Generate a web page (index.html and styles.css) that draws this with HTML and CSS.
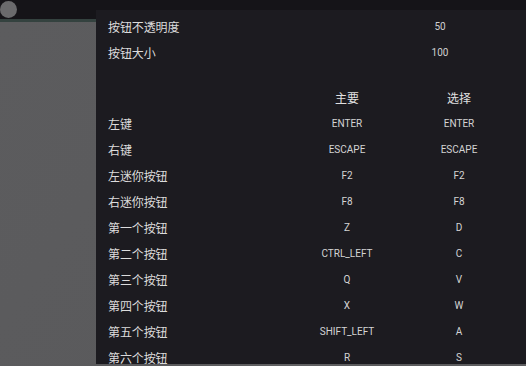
FILE: index.html
```html
<!DOCTYPE html>
<html lang="zh">
<head>
<meta charset="utf-8">
<link rel="stylesheet" href="styles.css">
</head>
<body>
<div class="screen">
  <div class="topbar"><span class="dot"></span></div>
  <div class="divider"></div>
  <div class="backdrop"></div>

  <div class="dialog">
    <span class="caret"></span>
    <div class="setting"><span class="label">按钮不透明度</span><span class="val">50</span></div>
    <div class="setting"><span class="label">按钮大小</span><span class="val">100</span></div>

    <div class="keys">
      <span></span><span class="head">主要</span><span class="head">选择</span>
      <span class="label">左键</span><span class="key">ENTER</span><span class="key">ENTER</span>
      <span class="label">右键</span><span class="key">ESCAPE</span><span class="key">ESCAPE</span>
      <span class="label">左迷你按钮</span><span class="key">F2</span><span class="key">F2</span>
      <span class="label">右迷你按钮</span><span class="key">F8</span><span class="key">F8</span>
      <span class="label">第一个按钮</span><span class="key">Z</span><span class="key">D</span>
      <span class="label">第二个按钮</span><span class="key">CTRL_LEFT</span><span class="key">C</span>
      <span class="label">第三个按钮</span><span class="key">Q</span><span class="key">V</span>
      <span class="label">第四个按钮</span><span class="key">X</span><span class="key">W</span>
      <span class="label">第五个按钮</span><span class="key">SHIFT_LEFT</span><span class="key">A</span>
      <span class="label">第六个按钮</span><span class="key">R</span><span class="key">S</span>
    </div>
  </div>
</div>
</body>
</html>
```

FILE: styles.css
```css
* { box-sizing: border-box; }
html, body {
  margin: 0;
  padding: 0;
  width: 526px;
  height: 366px;
  overflow: hidden;
  background: #3c3c3e;
}
.screen {
  position: relative;
  width: 526px;
  height: 366px;
  display: flex;
  flex-direction: column;
  font-family: Roboto, "Noto Sans CJK SC", sans-serif;
}
.topbar {
  height: 19px;
  background: #151418;
  display: flex;
  align-items: center;
  flex-shrink: 0;
}
.dot {
  width: 17px;
  height: 17px;
  border-radius: 50%;
  background: #6a6a6c;
  display: block;
}
.divider {
  height: 3px;
  background: #34423f;
  flex-shrink: 0;
}
.backdrop {
  flex: 1;
  background: linear-gradient(125deg, #5c5c5e 0%, #5a5a5c 55%, #616163 70%, #5a5a5c 80%, #5d5d5f 100%);
}
.dialog {
  position: absolute;
  left: 96px;
  top: 10px;
  right: 0;
  height: 354px;
  background: #1c1b20;
  padding: 4px 11px 0 12px;
  overflow: hidden;
}
.caret {
  position: absolute;
  left: 211px;
  top: -3px;
  width: 0;
  height: 0;
  border-left: 3px solid transparent;
  border-right: 3px solid transparent;
  border-bottom: 3px solid #8a8a8c;
}
.setting {
  display: grid;
  grid-template-columns: 287px 90px;
  height: 26px;
  align-items: center;
}
.label {
  font-family: "Noto Sans CJK SC", sans-serif;
  font-size: 12px;
  line-height: 16px;
  color: #dcdcdc;
  letter-spacing: -0.1px;
}
.val {
  font-size: 10px;
  line-height: 14px;
  color: #d0d0d0;
  text-align: center;
}
.keys {
  margin-top: 19px;
  display: grid;
  grid-template-columns: 183px 112px 112px;
  grid-auto-rows: 26px;
  align-items: center;
}
.head {
  font-family: "Noto Sans CJK SC", sans-serif;
  font-size: 12px;
  line-height: 16px;
  color: #e0e0e0;
  text-align: center;
}
.key {
  font-size: 10px;
  line-height: 14px;
  color: #d4d4d4;
  text-align: center;
}
```
